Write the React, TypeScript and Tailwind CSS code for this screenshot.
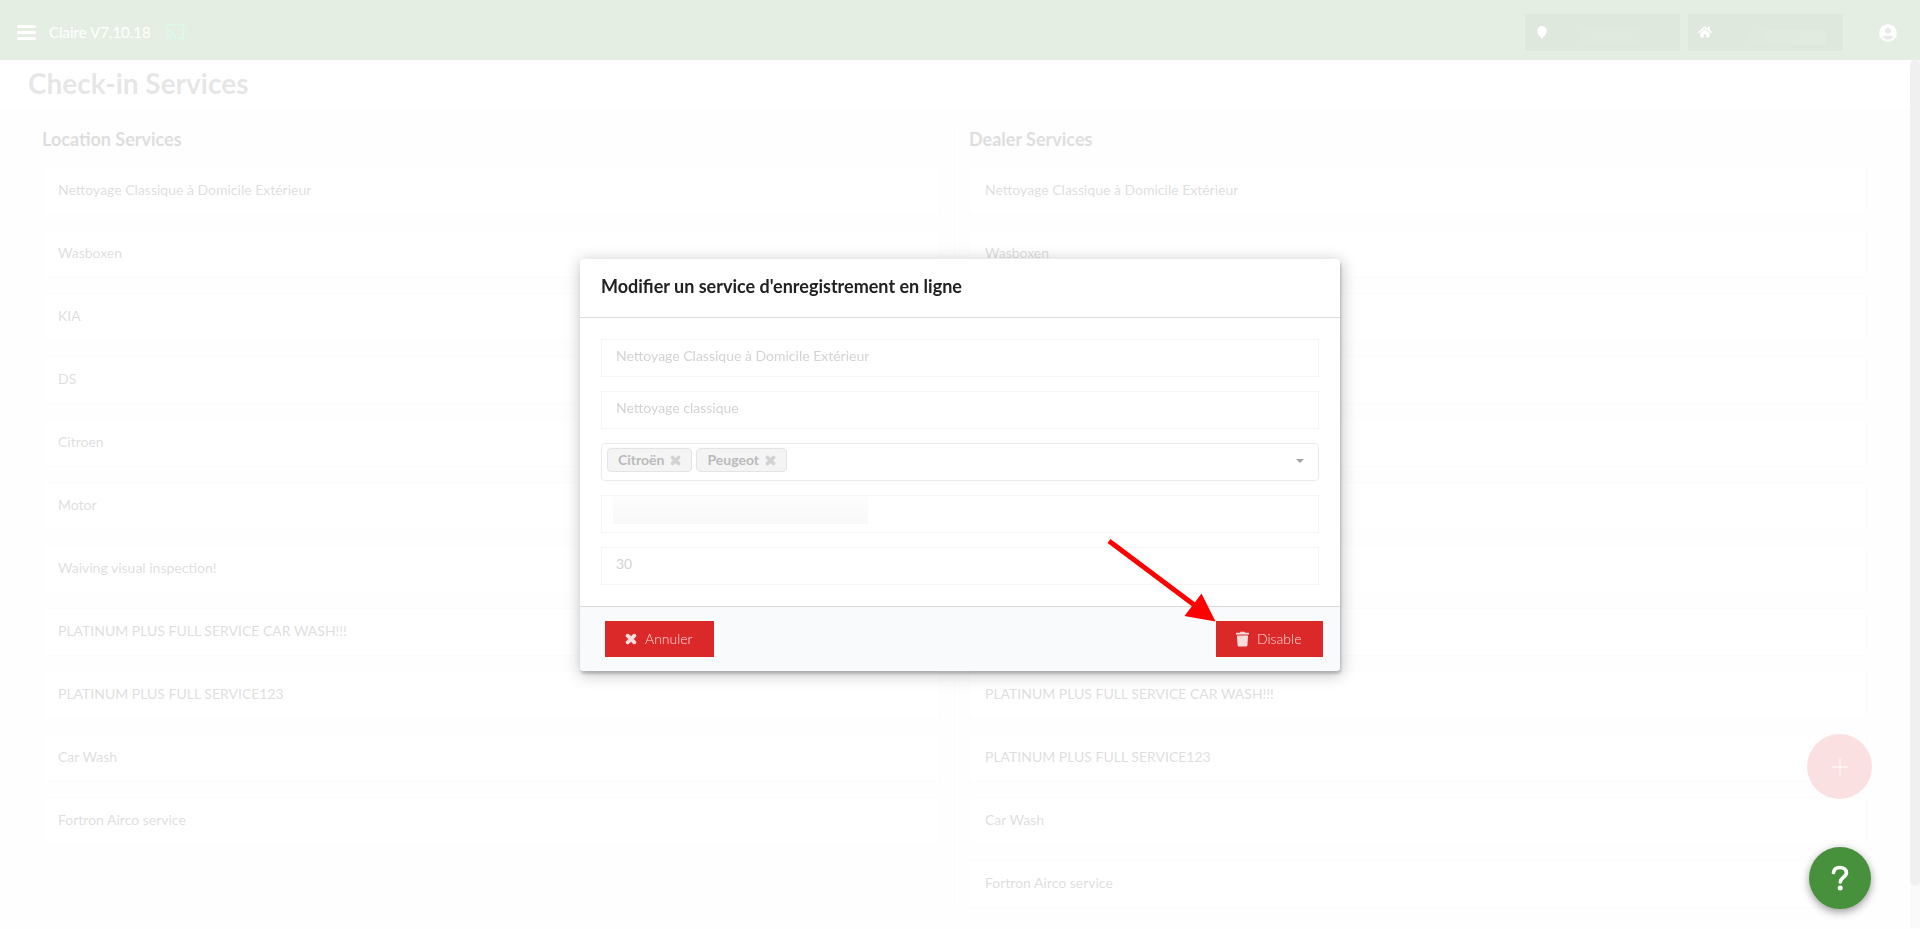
import type { ReactNode } from "react";
import { FaHome, FaUserCircle } from "react-icons/fa";

const locationServices = [
  "Nettoyage Classique à Domicile Extérieur",
  "Wasboxen",
  "KIA",
  "DS",
  "Citroen",
  "Motor",
  "Waiving visual inspection!",
  "PLATINUM PLUS FULL SERVICE CAR WASH!!!",
  "PLATINUM PLUS FULL SERVICE123",
  "Car Wash",
  "Fortron Airco service",
];

const dealerServices = [
  "Nettoyage Classique à Domicile Extérieur",
  "Wasboxen",
  "KIA",
  "DS",
  "Citroen",
  "Peugeot",
  "Motor",
  "Waiving visual inspection!",
  "PLATINUM PLUS FULL SERVICE CAR WASH!!!",
  "PLATINUM PLUS FULL SERVICE123",
  "Car Wash",
  "Fortron Airco service",
];

function CrossIcon({ className }: { className: string }) {
  return (
    <svg viewBox="0 0 12 12" className={className} aria-hidden="true">
      <path
        d="M2.700 2.700l6.600 6.600M9.300 2.700L2.700 9.300"
        stroke="currentColor"
        strokeWidth="3.900"
        strokeLinecap="round"
      />
    </svg>
  );
}

function TrashIcon() {
  return (
    <svg viewBox="0 0 13 16" className="h-4 w-[13px]" fill="currentColor" aria-hidden="true">
      <path d="M0 1.700h3.800l.8-1h3.800l.8 1H13v1.900H0z" />
      <path d="M.9 4.500h11.200l-.7 9.900c-.1.700-.5 1.100-1.200 1.100H2.800c-.7 0-1.100-.4-1.200-1.100z" />
    </svg>
  );
}

function CastIcon() {
  return (
    <svg viewBox="0 0 20 18" className="h-[18px] w-5" fill="none" stroke="currentColor" strokeWidth="2" aria-hidden="true">
      <path d="M1.5 5V2.5a1 1 0 0 1 1-1h15a1 1 0 0 1 1 1v12a1 1 0 0 1-1 1H12" />
      <path d="M1 7.5A9 9 0 0 1 10 16.500M1 11.500a5 5 0 0 1 5 5" />
      <path d="M1 14.500a2 2 0 0 1 2 2H1z" fill="currentColor" stroke="none" />
    </svg>
  );
}

function PinIcon() {
  return (
    <svg viewBox="0 0 10 13" className="h-[13px] w-2.5" fill="currentColor" aria-hidden="true">
      <path d="M5 0a4.800 4.800 0 0 1 4.800 4.800C9.800 8.200 6.500 10.500 5 13 3.500 10.500.2 8.200.2 4.800A4.800 4.800 0 0 1 5 0z" />
    </svg>
  );
}

function ServiceList({ title, services }: { title: string; services: string[] }) {
  return (
    <section className="min-w-0 flex-1 px-3.5">
      <h2 className="text-lg font-bold leading-7 text-[#212121]">{title}</h2>
      <ul className="mt-3.5 flex flex-col gap-[15px]">
        {services.map((name) => (
          <li key={name} className="h-12 border border-[#ebebeb] bg-white px-[15px] pt-[11px] text-sm leading-[22px] text-[#212121]">
            {name}
          </li>
        ))}
      </ul>
    </section>
  );
}

function HeaderButton({ label, icon, children }: { label: string; icon: ReactNode; children: ReactNode }) {
  return (
    <button type="button" aria-label={label} className="flex h-[37px] w-[155px] items-center bg-[#246617] text-white">
      {icon}
      {children}
    </button>
  );
}

function Chip({ name }: { name: string }) {
  return (
    <span className="flex h-6 items-center gap-1.5 rounded border border-[#e4e4e4] bg-[#f4f4f4] px-2.5 text-sm font-bold text-[#bababa]">
      {name}
      <button type="button" aria-label={`Remove ${name}`} className="text-[#d2d2d2]">
        <CrossIcon className="size-[11px]" />
      </button>
    </span>
  );
}

const fieldClass =
  "block h-[38px] w-full border border-[#f5f5f5] bg-white px-3.5 pb-[5px] text-sm text-[#d3d3d3] outline-none";

export default function App() {
  return (
    <div className="relative min-h-screen bg-[#f3f3f3] font-['Lato',sans-serif]">
      <header className="flex h-[60px] items-center bg-[#4b8e3e] pt-1 text-white">
        <button type="button" aria-label="Menu" className="ml-[17px] flex w-[19px] flex-col gap-[3px]">
          <span className="h-[3px] w-full rounded-full bg-white" />
          <span className="h-[3px] w-full rounded-full bg-white" />
          <span className="h-[3px] w-full rounded-full bg-white" />
        </button>
        <span className="ml-[13px] text-[15px] leading-5">Claire V7.10.18</span>
        <span className="ml-3.5 text-[#23d080]">
          <CastIcon />
        </span>
        <div className="ml-auto flex items-center gap-2">
          <HeaderButton
            label="Location"
            icon={
              <span className="ml-3">
                <PinIcon />
              </span>
            }
          >
            <span className="ml-6 mt-2 h-3.5 w-[68px] bg-gradient-to-r from-[#246617] via-[#347528] to-[#2c6e20]" />
          </HeaderButton>
          <HeaderButton label="Dealer" icon={<FaHome className="ml-2.5 size-3.5" />}>
            <span className="ml-6 mt-2.5 h-[15px] w-[90px] bg-gradient-to-r from-[#246617] via-[#347528] to-[#3a7a30]" />
          </HeaderButton>
        </div>
        <button type="button" aria-label="Account" className="ml-9 mr-[23px] mt-0.5">
          <FaUserCircle className="size-[18px]" />
        </button>
      </header>

      <div className="flex">
        <main className="min-w-0 flex-1">
          <div className="h-[51px] border-b border-[#e8e8e8] bg-white px-7 pt-[3px]">
            <h1 className="text-[28px] font-bold leading-10 text-[#585858]">Check-in Services</h1>
          </div>
          <div className="flex pb-5 pl-7 pr-[29px] pt-3.5">
            <ServiceList title="Location Services" services={locationServices} />
            <div className="w-px bg-[#e4e4e4]" />
            <ServiceList title="Dealer Services" services={dealerServices} />
          </div>
        </main>
        <div className="w-2.5 bg-[#dedede]">
          <div className="h-[calc(100vh-103px)] rounded-full bg-[#9b9b9b]" />
        </div>
      </div>

      <button
        type="button"
        aria-label="Add service"
        className="fixed bottom-[130px] right-12 flex size-[65px] items-center justify-center rounded-full bg-[#e43038] text-white"
      >
        <svg viewBox="0 0 18 18" className="size-[18px]" stroke="currentColor" aria-hidden="true">
          <path d="M9 .5v17M.5 9h17" />
        </svg>
      </button>

      <div className="fixed inset-0 flex items-center justify-center bg-white/85">
        <div
          role="dialog"
          aria-modal="true"
          aria-labelledby="dialog-title"
          className="w-[760px] max-w-full overflow-hidden rounded bg-white shadow-[1px_3px_3px_0_rgba(0,0,0,0.2),1px_3px_15px_2px_rgba(0,0,0,0.2)]"
        >
          <h2 id="dialog-title" className="border-b border-[#dcdcdc] px-[21px] pb-[18px] pt-3.5 text-lg font-bold leading-[26px] text-[#212121]">
            Modifier un service d'enregistrement en ligne
          </h2>
          <form className="flex flex-col gap-3.5 px-[21px] py-[21px]">
            <input aria-label="Nom" className={fieldClass} defaultValue="Nettoyage Classique à Domicile Extérieur" readOnly />
            <input aria-label="Description" className={fieldClass} defaultValue="Nettoyage classique" readOnly />
            <div className="flex h-[38px] items-center gap-1 rounded border border-[#ebebeb] pb-[3px] pl-[5px] pr-3.5">
              <Chip name="Citroën" />
              <Chip name="Peugeot" />
              <button type="button" aria-label="Marques" className="ml-auto mt-0.5 text-[#a3a3a3]">
                <svg viewBox="0 0 8 4" className="h-1 w-2" fill="currentColor" aria-hidden="true">
                  <path d="M0 0h8L4 4z" />
                </svg>
              </button>
            </div>
            <div className="h-[38px] border border-[#f5f5f5] px-[11px]">
              <div className="h-7 w-[255px] bg-gradient-to-b from-[#fdfdfd] to-[#f8f8f8]" />
            </div>
            <input aria-label="Durée" className={fieldClass} defaultValue="30" readOnly />
          </form>
          <div className="flex justify-between border-t border-[#d8d8d8] bg-[#f9fafb] py-3.5 pl-[25px] pr-[17px]">
            <button type="button" className="flex h-9 w-[109px] items-center gap-2 bg-[#db2828] pl-5 text-sm font-light text-[#fbdcdc]">
              <CrossIcon className="size-3" />
              Annuler
            </button>
            <button type="button" className="flex h-9 w-[107px] items-center gap-2 bg-[#db2828] pl-5 text-sm font-light text-[#fbdcdc]">
              <TrashIcon />
              Disable
            </button>
          </div>
        </div>
        <svg
          viewBox="0 0 110 84"
          className="pointer-events-none absolute left-[calc(50%+146px)] top-[calc(50%+73px)] h-[84px] w-[110px]"
          aria-hidden="true"
        >
          <path d="M3 3l88 66" stroke="#ff0000" strokeWidth="5" />
          <path d="M109.500 83.500L95.500 55.500 78.500 78z" fill="#ff0000" />
        </svg>
      </div>

      <button
        type="button"
        aria-label="Help"
        className="fixed bottom-5 right-[49px] flex size-[62px] items-center justify-center rounded-full bg-[#48913c] text-white shadow-[0_3px_8px_rgba(0,0,0,0.4)]"
      >
        <svg viewBox="0 0 18 26" className="h-[26px] w-[18px]" fill="none" stroke="currentColor" aria-hidden="true">
          <path d="M2.500 7.500C2.900 4.400 5.400 2.500 8.800 2.500c3.900 0 6.600 2.100 6.600 5.200 0 4.400-6 5-6.100 9.300" strokeWidth="3.700" strokeLinecap="round" />
          <circle cx="9.200" cy="23" r="2.500" fill="currentColor" stroke="none" />
        </svg>
      </button>
    </div>
  );
}
